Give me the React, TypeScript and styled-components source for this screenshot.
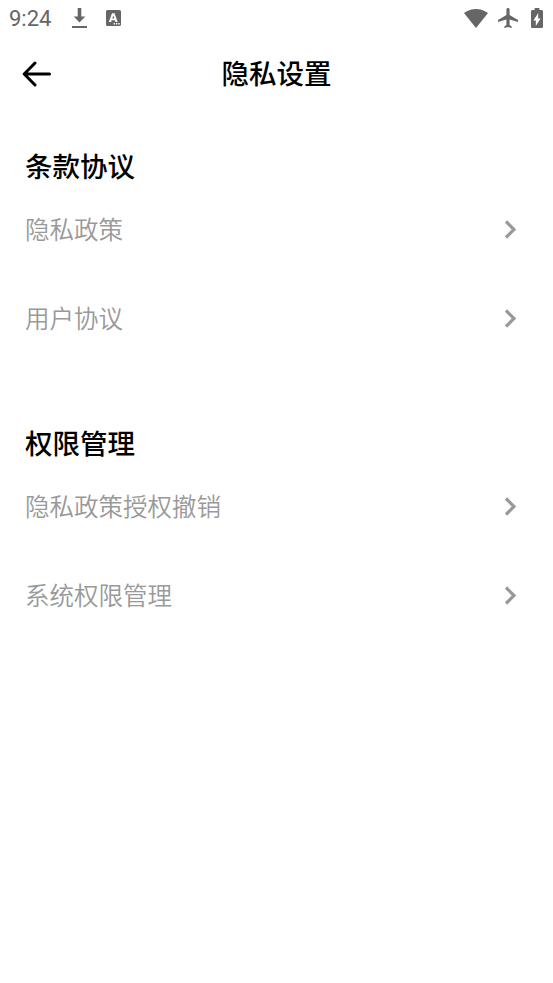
import React from 'react';
import styled, { createGlobalStyle } from 'styled-components';

const Global = createGlobalStyle`
  * { box-sizing: border-box; }
  body { margin: 0; background: #fff; }
`;
const Screen = styled.div`
  width: 553px; height: 983px; overflow: hidden; background: #fff;
  font-family: Roboto, "Noto Sans CJK SC", sans-serif;
`;
const StatusBar = styled.div`
  height: 38px; display: flex; align-items: center; padding: 0 10px 2px 9px; color: #666;
`;
const Time = styled.span`
  width: 62px; padding-top: 2px; font-size: 22px; line-height: 34px;
`;
const Left = styled.div`
  display: flex; align-items: center; gap: 18px; flex: 1;
`;
const Right = styled.div`
  display: flex; align-items: center; gap: 10px;
`;
const Glyph = styled.svg`
  display: block; fill: #666;
`;
const BatteryIcon = styled(Glyph)`
  margin-left: 3px;
`;
const Header = styled.header`
  height: 72px; display: grid; grid-template-columns: 80px 1fr 80px; align-items: center;
`;
const BackButton = styled.button`
  border: 0; background: none; padding: 0 0 0 22px; display: flex;
`;
const Title = styled.h1`
  margin: 2px 0 0; text-align: center; font-size: 27.5px; font-weight: 500; line-height: 40px; color: #000;
`;
const Section = styled.section`
  padding: 38px 36px 0 25px; height: 277px;
`;
const Heading = styled.h2`
  margin: 0; font-size: 27.5px; font-weight: 500; line-height: 40px; color: #000;
`;
const List = styled.div`
  margin-top: -3px;
`;
const Row = styled.div`
  height: 89px; display: flex; align-items: center; justify-content: space-between;
`;
const Label = styled.span`
  padding-top: 2px; font-size: 24.5px; font-weight: 350; line-height: 36px; color: #999;
`;

const Chevron = () => (
  <svg width="13" height="20" viewBox="0 0 13 20" fill="none" stroke="#999" strokeWidth="3.2">
    <path d="M2 1.5l8 8-8 8" />
  </svg>
);
const groups = [
  { title: '条款协议', items: ['隐私政策', '用户协议'] },
  { title: '权限管理', items: ['隐私政策授权撤销', '系统权限管理'] },
];

export default function App() {
  return (
    <Screen>
      <Global />
      <StatusBar>
        <Time>9:24</Time>
        <Left>
          <Glyph width="17" height="22" viewBox="0 0 17 22">
            <path d="M6.7 1h3.6v8.500h4L8.500 15.600 2.700 9.500h4zM1 19h15v2.100H1z" />
          </Glyph>
          <Glyph width="15" height="16" viewBox="0 0 15 16">
            <path fillRule="evenodd" d="M1.500 0h12A1.500 1.500 0 0 1 15 1.500v13a1.500 1.500 0 0 1-1.500 1.500h-12A1.500 1.500 0 0 1 0 14.500V1.500A1.500 1.500 0 0 1 1.500 0zM6 3.200L2.800 12h2.300l.55-1.700h3.200L9.400 12h2.300L8.500 3.200zM7.250 5.600l1 3h-2zM7.600 13v1.400H9V13zM10 13v1.400h1.400V13zM12.300 13v1.400h1.400V13z" />
          </Glyph>
        </Left>
        <Right>
          <Glyph width="24" height="19" viewBox="0.36 3 23.28 18.5" preserveAspectRatio="none">
            <path d="M12.01 21.49L23.64 7c-.45-.34-4.93-4-11.64-4C5.28 3 .81 6.66.36 7l11.63 14.49.01.01.01-.01z" />
          </Glyph>
          <Glyph width="20" height="20" viewBox="2 2 19 20" preserveAspectRatio="none">
            <path d="M21 16v-2l-8-5V3.500c0-.83-.67-1.500-1.500-1.500S10 2.670 10 3.500V9l-8 5v2l8-2.500V19l-2 1.500V22l3.500-1 3.500 1v-1.500L13 19v-5.500l8 2.500z" />
          </Glyph>
          <BatteryIcon width="12" height="20" viewBox="7 2 10 20" preserveAspectRatio="none">
            <path d="M15.670 4H14V2h-4v2H8.330C7.600 4 7 4.600 7 5.330v15.330C7 21.400 7.600 22 8.330 22h7.330c.74 0 1.340-.6 1.340-1.330V5.330C17 4.600 16.400 4 15.670 4zM11 20v-5.500H9L13 7v5.500h2L11 20z" />
          </BatteryIcon>
        </Right>
      </StatusBar>
      <Header>
        <BackButton aria-label="返回">
          <svg width="30" height="26" viewBox="0 0 30 26" fill="none" stroke="#000" strokeWidth="3" strokeLinecap="round" strokeLinejoin="round">
            <path d="M27.500 13H2.500M13 2L2.200 13 13 24" />
          </svg>
        </BackButton>
        <Title>隐私设置</Title>
      </Header>
      {groups.map((g) => (
        <Section key={g.title}>
          <Heading>{g.title}</Heading>
          <List>
            {g.items.map((t) => (
              <Row key={t}><Label>{t}</Label><Chevron /></Row>
            ))}
          </List>
        </Section>
      ))}
    </Screen>
  );
}
